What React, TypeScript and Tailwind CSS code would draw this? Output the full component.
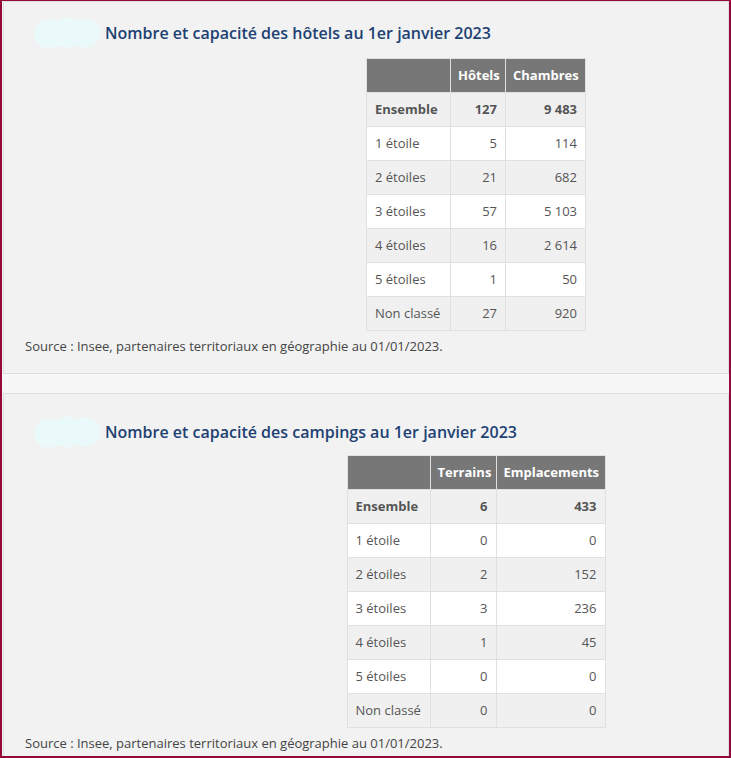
import React from "react";

type Row = { label: string; a: string; b: string; bold?: boolean };

const hotels: Row[] = [
  { label: "Ensemble", a: "127", b: "9 483", bold: true },
  { label: "1 étoile", a: "5", b: "114" },
  { label: "2 étoiles", a: "21", b: "682" },
  { label: "3 étoiles", a: "57", b: "5 103" },
  { label: "4 étoiles", a: "16", b: "2 614" },
  { label: "5 étoiles", a: "1", b: "50" },
  { label: "Non classé", a: "27", b: "920" },
];

const campings: Row[] = [
  { label: "Ensemble", a: "6", b: "433", bold: true },
  { label: "1 étoile", a: "0", b: "0" },
  { label: "2 étoiles", a: "2", b: "152" },
  { label: "3 étoiles", a: "3", b: "236" },
  { label: "4 étoiles", a: "1", b: "45" },
  { label: "5 étoiles", a: "0", b: "0" },
  { label: "Non classé", a: "0", b: "0" },
];

function Blob() {
  return (
    <div className="relative w-[66px] h-[30px] shrink-0">
      <div className="absolute left-0 top-[2px] w-[30px] h-[28px] rounded-full bg-[#eafafb] blur-[1px]" />
      <div className="absolute left-[18px] top-0 w-[30px] h-[30px] rounded-full bg-[#eafafb] blur-[1px]" />
      <div className="absolute left-[36px] top-[1px] w-[30px] h-[28px] rounded-full bg-[#eafafb] blur-[1px]" />
    </div>
  );
}

function DataTable({
  rows,
  h1,
  h2,
  widths,
  tableW,
}: {
  rows: Row[];
  h1: string;
  h2: string;
  widths: [string, string, string];
  tableW: string;
}) {
  return (
    <table className={`border-collapse table-fixed text-[13px] text-[#555] ${tableW}`}>
      <colgroup>
        <col className={widths[0]} />
        <col className={widths[1]} />
        <col className={widths[2]} />
      </colgroup>
      <thead>
        <tr className="bg-[#777777] text-white font-bold h-[34px]">
          <th className="border border-[#e0e0e0]"></th>
          <th className="border border-[#e0e0e0] px-[7px] text-right font-bold">{h1}</th>
          <th className="border border-[#e0e0e0] px-[7px] text-right font-bold">{h2}</th>
        </tr>
      </thead>
      <tbody>
        {rows.map((r, i) => (
          <tr key={i} className={`h-[34px] ${i % 2 === 0 ? "bg-[#f0f0f0]" : "bg-white"} ${r.bold ? "font-bold" : ""}`}>
            <td className="border border-[#e0e0e0] px-[8px] text-left whitespace-nowrap">{r.label}</td>
            <td className="border border-[#e0e0e0] px-[8px] text-right">{r.a}</td>
            <td className="border border-[#e0e0e0] px-[8px] text-right">{r.b}</td>
          </tr>
        ))}
      </tbody>
    </table>
  );
}

function Panel({
  title,
  rows,
  h1,
  h2,
  widths,
  tableW,
  className,
  tableMt,
}: {
  title: string;
  rows: Row[];
  h1: string;
  h2: string;
  widths: [string, string, string];
  tableW: string;
  className: string;
  tableMt: string;
}) {
  return (
    <div className={`bg-[#f2f2f2] border border-[#dedede] ${className}`}>
      <div className="flex items-center pl-[30px]">
        <Blob />
        <h2 className="ml-[5px] text-[16px] font-semibold text-[#1d4173] leading-[22px]">{title}</h2>
      </div>
      <div className={`flex justify-center pl-[220px] ${tableMt}`}>
        <DataTable rows={rows} h1={h1} h2={h2} widths={widths} tableW={tableW} />
      </div>
      <p className="pl-[21px] text-[13px] text-[#444] leading-[18px] mt-[6px]">
        Source : Insee, partenaires territoriaux en géographie au 01/01/2023.
      </p>
    </div>
  );
}

export default function App() {
  return (
    <div
      className="w-[731px] h-[758px] overflow-hidden bg-[#f7f7f7] border-t border-l-2 border-r-2 border-b-2 border-[#94093a] pl-px"
      style={{ fontFamily: '"Open Sans", "Noto Sans", sans-serif' }}
    >
      <Panel
        className="h-[373px] pt-[16px]"
        title="Nombre et capacité des hôtels au 1er janvier 2023"
        rows={hotels}
        h1="Hôtels"
        h2="Chambres"
        widths={["w-[84px]", "w-[55px]", "w-[80px]"]}
        tableW="w-[219px]"
        tableMt="mt-[10px]"
      />
      <Panel
        className="mt-[19px] h-[400px] pt-[23px]"
        title="Nombre et capacité des campings au 1er janvier 2023"
        rows={campings}
        h1="Terrains"
        h2="Emplacements"
        widths={["w-[83px]", "w-[66px]", "w-[109px]"]}
        tableW="w-[258px]"
        tableMt="mt-[8px]"
      />
    </div>
  );
}
